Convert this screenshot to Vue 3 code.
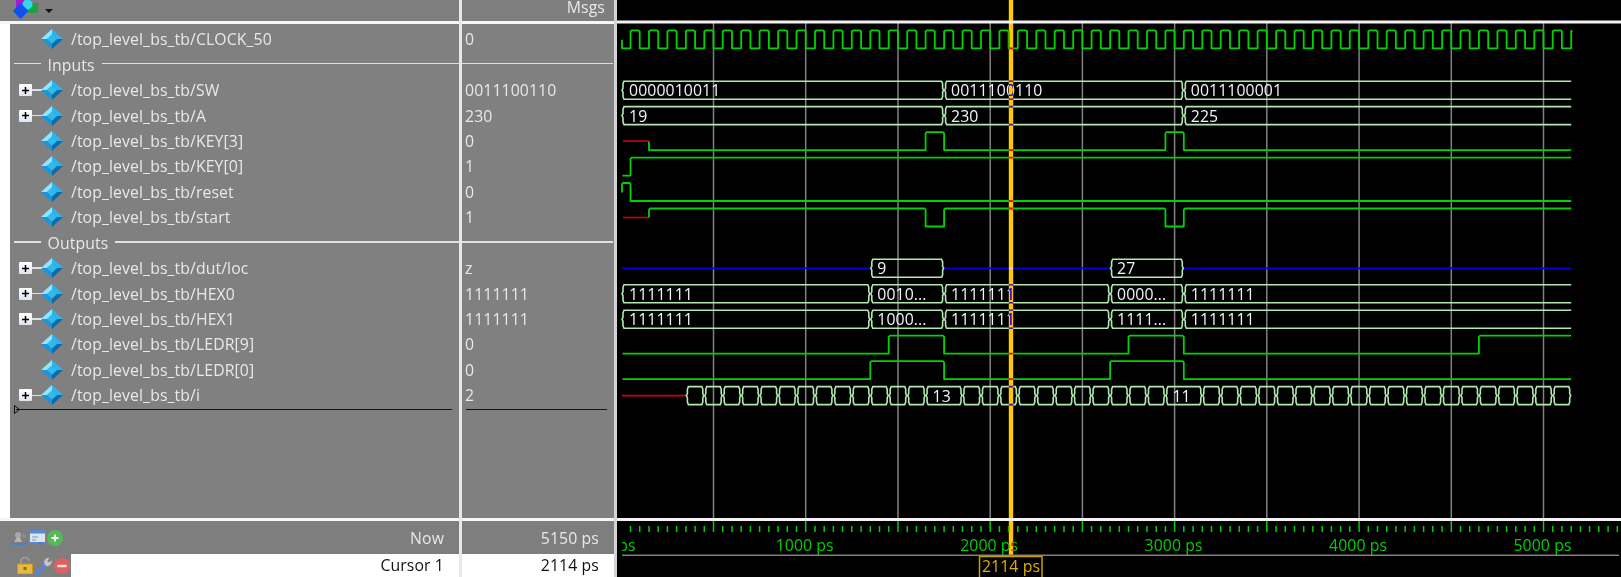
<script setup>
const rows = [
  { name: '/top_level_bs_tb/CLOCK_50', value: '0' },
  { divider: 'Inputs' },
  { name: '/top_level_bs_tb/SW', value: '0011100110', plus: true },
  { name: '/top_level_bs_tb/A', value: '230', plus: true },
  { name: '/top_level_bs_tb/KEY[3]', value: '0' },
  { name: '/top_level_bs_tb/KEY[0]', value: '1' },
  { name: '/top_level_bs_tb/reset', value: '0' },
  { name: '/top_level_bs_tb/start', value: '1' },
  { divider: 'Outputs' },
  { name: '/top_level_bs_tb/dut/loc', value: 'z', plus: true },
  { name: '/top_level_bs_tb/HEX0', value: '1111111', plus: true },
  { name: '/top_level_bs_tb/HEX1', value: '1111111', plus: true },
  { name: '/top_level_bs_tb/LEDR[9]', value: '0' },
  { name: '/top_level_bs_tb/LEDR[0]', value: '0' },
  { name: '/top_level_bs_tb/i', value: '2', plus: true },
]

const END = 5150
const X = (t) => 621.3 + 0.18444 * t
const top = (i) => 30.3 + 25.45 * i
const f = (n) => n.toFixed(1)

function bit(i, prefix, startLevel, edges, finish = true) {
  const hi = top(i)
  const lo = hi + 18
  let level = startLevel
  let d = prefix
  for (const e of edges) {
    const x = X(e)
    if (level) d += `L${f(x - 1.2)} ${f(hi)}L${f(x)} ${f(hi + 1.2)}L${f(x)} ${f(lo)}`
    else d += `L${f(x)} ${f(lo)}L${f(x)} ${f(hi + 1.2)}L${f(x + 1.2)} ${f(hi)}`
    level = !level
  }
  if (finish) d += `L${f(X(END))} ${f(level ? hi : lo)}`
  return d
}

const clockEdges = []
for (let t = 50; t <= END; t += 50) clockEdges.push(t)

const lowStart = (i) => `M622.5 ${f(top(i) + 18)}`
const bitPaths = [
  bit(0, `M622 ${f(top(0) + 9.5)}L622 ${f(top(0) + 18)}`, false, clockEdges, false),
  bit(4, `M649 ${f(top(4) + 9.5)}L649 ${f(top(4) + 18)}`, false, [1650, 1750, 2950, 3050]),
  bit(5, lowStart(5), false, [50]),
  bit(6, `M622 ${f(top(6) + 9.5)}L622 ${f(top(6) + 1.2)}L623.2 ${f(top(6))}`, true, [50]),
  bit(7, `M649 ${f(top(7) + 9)}L649 ${f(top(7) + 1.2)}L650.2 ${f(top(7))}`, true, [1650, 1750, 2950, 3050]),
  bit(12, lowStart(12), false, [1450, 1750, 2750, 3050, 4650]),
  bit(13, lowStart(13), false, [1350, 1750, 2650, 3050]),
]

const redPaths = [
  `M623 ${f(top(4) + 9)}L649 ${f(top(4) + 9)}`,
  `M623 ${f(top(7) + 9)}L649 ${f(top(7) + 9)}`,
  `M622 ${f(top(14) + 9)}L686 ${f(top(14) + 9)}`,
]

const zMid = top(9) + 9
const bluePaths = [[0, 1350], [1750, 2650], [3050, END]].map(
  ([a, b]) => `M${f(Math.max(X(a), 622))} ${f(zMid)}L${f(X(b))} ${f(zMid)}`,
)

function hex(i, t0, t1) {
  const t = top(i)
  const m = t + 9
  const b = t + 18
  const l = Math.max(X(t0) + 1, 622.5)
  const r = X(t1) - 1
  const leftSide = `M${f(r - 1.5)} ${f(t)}L${f(l + 1.5)} ${f(t)}L${f(l + 0.5)} ${f(t + 2.5)}L${f(l + 0.5)} ${f(m - 2)}L${f(l - 0.5)} ${f(m)}L${f(l + 0.5)} ${f(m + 2)}L${f(l + 0.5)} ${f(b - 2.5)}L${f(l + 1.5)} ${f(b)}L${f(r - 1.5)} ${f(b)}`
  if (t1 === END && i !== 14) {
    return `M${f(X(END))} ${f(t)}L${f(l + 1.5)} ${f(t)}L${f(l + 0.5)} ${f(t + 2.5)}L${f(l + 0.5)} ${f(m - 2)}L${f(l - 0.5)} ${f(m)}L${f(l + 0.5)} ${f(m + 2)}L${f(l + 0.5)} ${f(b - 2.5)}L${f(l + 1.5)} ${f(b)}L${f(X(END))} ${f(b)}`
  }
  return `${leftSide}L${f(r - 0.5)} ${f(b - 2.5)}L${f(r - 0.5)} ${f(m + 2)}L${f(r + 0.5)} ${f(m)}L${f(r - 0.5)} ${f(m - 2)}L${f(r - 0.5)} ${f(t + 2.5)}Z`
}

const busDefs = [
  [2, [[0, 1750, '0000010011'], [1750, 3050, '0011100110'], [3050, END, '0011100001']]],
  [3, [[0, 1750, '19'], [1750, 3050, '230'], [3050, END, '225']]],
  [9, [[1350, 1750, '9'], [2650, 3050, '27']]],
  [10, [[0, 1350, '1111111'], [1350, 1750, '0010...'], [1750, 2650, '1111111'], [2650, 3050, '0000...'], [3050, END, '1111111']]],
  [11, [[0, 1350, '1111111'], [1350, 1750, '1000...'], [1750, 2650, '1111111'], [2650, 3050, '1111...'], [3050, END, '1111111']]],
]
const iSegs = []
for (let t = 350; t < END; ) {
  if (t === 1650) { iSegs.push([t, 1850, '13']); t = 1850 }
  else if (t === 2950) { iSegs.push([t, 3150, '11']); t = 3150 }
  else { iSegs.push([t, t + 100, '']); t += 100 }
}
busDefs.push([14, iSegs])

const busPaths = []
const busTexts = []
for (const [i, segs] of busDefs) {
  for (const [a, b, label] of segs) {
    busPaths.push(hex(i, a, b))
    if (label) busTexts.push({ x: f(Math.max(X(a), 622) + 7), y: f(top(i) + 15), label })
  }
}

const grid = []
for (let k = 1; k <= 10; k++) grid.push(f(X(500 * k)))

const minorTicks = []
const majorTicks = []
for (let t = 50; X(t) < 1619; t += 50) {
  if (t % 500 === 0) majorTicks.push(f(X(t)))
  else minorTicks.push(f(X(t)))
}
const timeLabels = [0, 1000, 2000, 3000, 4000, 5000].map((t) => ({ x: f(X(t) - 1), label: `${t} ps` }))
</script>

<template>
  <div class="app">
    <section class="col names">
      <header class="head">
        <svg class="logo" viewBox="0 0 40 21" width="40" height="21">
          <rect x="16" y="0" width="8" height="7" fill="#a020d0" />
          <rect x="28" y="3" width="10" height="10" fill="#20a040" />
          <circle cx="27.5" cy="4.5" r="5" fill="#30d8f0" />
          <polygon points="20.5,3 28.5,11 20.5,19 13,11" fill="#1050f0" />
        </svg>
        <svg class="caret" viewBox="0 0 8 4" width="8" height="4"><polygon points="0,0 8,0 4,4" fill="#111" /></svg>
      </header>
      <div class="hline"></div>
      <div class="body names-body">
        <div v-for="(r, n) in rows" :key="n" class="row">
          <template v-if="r.divider">
            <span class="rule short"></span>
            <span class="div-text">{{ r.divider }}</span>
            <span class="rule grow"></span>
          </template>
          <template v-else>
            <span class="tree">
              <template v-if="r.plus">
                <span class="plus"><svg viewBox="0 0 9 9" width="9" height="9"><path d="M1 4.5H8M4.5 1V8" stroke="#000" stroke-width="1.5" /></svg></span>
                <span class="conn"></span>
              </template>
            </span>
            <svg class="dia" viewBox="0 0 22 20" width="22" height="20">
              <polygon points="11,0 22,10 16,10 11,5.5" fill="#2cb4ee" />
              <polygon points="11,0 0,10 6,10 11,5.5" fill="#8fe6ff" />
              <polygon points="0,10 11,20 11,14.5 6,10" fill="#1c94d8" />
              <polygon points="22,10 11,20 11,14.5 16,10" fill="#0a6cab" />
              <polygon points="11,5.5 16,10 11,14.5 6,10" fill="#2cbcf4" />
            </svg>
            <span class="name">{{ r.name }}</span>
          </template>
        </div>
        <div class="endline">
          <svg class="marker" viewBox="0 0 6 9" width="6" height="9"><polygon points="0.5,0.5 5.5,4.5 0.5,8.5" fill="none" stroke="#111" /></svg>
        </div>
      </div>
      <div class="hline"></div>
      <footer class="foot">
        <div class="foot-row now-row">
          <span class="icons">
            <svg viewBox="0 0 16 14" width="16" height="14">
              <circle cx="6" cy="4" r="3" fill="#a8a8a8" />
              <path d="M2 11 L5 6 H8 L10 11Z" fill="#b4b4b4" />
              <circle cx="12" cy="5" r="2.2" fill="#8c8c8c" />
              <path d="M1 10V13H15V10" fill="none" stroke="#3c82d8" stroke-width="1.5" />
            </svg>
            <svg viewBox="0 0 17 16" width="17" height="16">
              <rect x="0.5" y="0.5" width="16" height="12" fill="#dce4f2" stroke="#5a8ad0" />
              <rect x="0.5" y="0.5" width="16" height="3" fill="#5a8ad0" />
              <path d="M3 7H9M3 10H7" stroke="#7a9ac8" />
              <polygon points="9,12 14,12 11.5,16" fill="#4a7ac8" />
            </svg>
            <svg viewBox="0 0 16 16" width="16" height="16">
              <circle cx="8" cy="8" r="8" fill="#58b858" />
              <path d="M4.5 8H11.5M8 4.5V11.5" stroke="#eaf8ea" stroke-width="2" />
            </svg>
          </span>
          <span class="foot-label">Now</span>
        </div>
        <div class="foot-row cursor-row">
          <span class="icons icons2">
            <svg viewBox="0 0 16 17" width="16" height="17">
              <path d="M4 8V4.5a4 4 0 0 1 8 0" fill="none" stroke="#a0a0a0" stroke-width="1.6" />
              <rect x="0.5" y="7" width="15" height="10" fill="#e8b840" stroke="#c89820" />
              <rect x="6.5" y="10" width="3" height="3" fill="#8a6a10" />
            </svg>
            <svg viewBox="0 0 17 18" width="17" height="18">
              <path d="M2 16.5 L11 7" stroke="#4f86e0" stroke-width="3.6" stroke-linecap="round" />
              <path d="M9.5 7 A4.5 4.5 0 0 1 14.5 0.8 L12.4 3.8 L14 5.6 L16.6 3.4 A4.5 4.5 0 0 1 11 9Z" fill="#c4c4c4" />
            </svg>
            <svg viewBox="0 0 16 16" width="16" height="16">
              <circle cx="8" cy="8" r="8" fill="#e06060" />
              <path d="M3.5 8H12.5" stroke="#fbeaea" stroke-width="2.4" />
            </svg>
          </span>
          <span class="cursor-cell">Cursor 1</span>
        </div>
      </footer>
    </section>

    <section class="col values">
      <header class="head msgs">Msgs</header>
      <div class="hline"></div>
      <div class="body">
        <div v-for="(r, n) in rows" :key="n" class="row value-row">
          <span v-if="r.divider" class="rule grow"></span>
          <span v-else class="val">{{ r.value }}</span>
        </div>
        <div class="endline value-end"></div>
      </div>
      <div class="hline"></div>
      <footer class="foot">
        <div class="foot-row now-row val-foot"><span class="foot-label">5150 ps</span></div>
        <div class="foot-row cursor-row"><span class="cursor-cell full">2114 ps</span></div>
      </footer>
    </section>

    <svg class="wave" viewBox="617 0 1004 577" width="1004" height="577">
      <defs>
        <clipPath id="scale-clip"><rect x="622" y="530" width="999" height="30" /></clipPath>
      </defs>
      <rect x="617" y="0" width="1004" height="577" fill="#000" />
      <line v-for="g in grid" :key="g" :x1="g" :x2="g" y1="23" y2="518" class="grid" />
      <path v-for="(d, n) in bluePaths" :key="'z' + n" :d="d" class="z" />
      <path v-for="(d, n) in redPaths" :key="'x' + n" :d="d" class="red" />
      <path v-for="(d, n) in bitPaths" :key="'b' + n" :d="d" class="bit" />
      <path v-for="(d, n) in busPaths" :key="'h' + n" :d="d" class="bus" />
      <text v-for="(t, n) in busTexts" :key="'t' + n" :x="t.x" :y="t.y" class="bus-text">{{ t.label }}</text>

      <line v-for="x in minorTicks" :key="'m' + x" :x1="x" :x2="x" y1="526" y2="532" class="tick" />
      <line v-for="x in majorTicks" :key="'j' + x" :x1="x" :x2="x" y1="521" y2="532" class="tick" />
      <g clip-path="url(#scale-clip)">
        <text v-for="l in timeLabels" :key="l.label" :x="l.x" y="551" class="time">{{ l.label }}</text>
      </g>
      <line x1="622" x2="1619" y1="555.3" y2="555.3" class="axis" />

      <rect x="1008.8" y="0" width="4.4" height="555" class="cursor" />
      <rect x="617" y="20.5" width="1004" height="3" fill="#f2f2f2" />
      <rect x="617" y="518" width="1004" height="3" fill="#f2f2f2" />

      <rect x="979.5" y="556.5" width="62.5" height="22" class="cursor-box" />
      <text x="1011" y="571.5" class="cursor-text">2114 ps</text>
    </svg>
  </div>
</template>

<style scoped>
.app {
  display: flex;
  width: 1621px;
  height: 577px;
  overflow: hidden;
  background: #000;
  font-family: "Open Sans", "Noto Sans", sans-serif;
  font-size: 15.8px;
  letter-spacing: 0.1px;
  color: #e8e8e8;
  filter: blur(0.4px);
}
.col {
  display: flex;
  flex-direction: column;
  background: #808080;
  height: 577px;
  flex: none;
  box-sizing: border-box;
}
.names { width: 459px; }
.values {
  width: 158px;
  border-left: 3.5px solid #e8e8e8;
  border-right: 3.5px solid #d4d4d4;
}
.head {
  height: 20.5px;
  flex: none;
  display: flex;
  align-items: flex-start;
  background: #7e7e7e;
}
.logo { flex: none; }
.caret { margin: 9px 0 0 5px; flex: none; }
.msgs {
  justify-content: flex-end;
  padding-right: 9px;
  line-height: 14px;
}
.hline { height: 3px; background: #f6f6f6; flex: none; }
.body {
  flex: 1;
  min-height: 0;
  padding-top: 3px;
  box-sizing: border-box;
}
.names-body { border-left: 10.5px solid #fff; }
.row {
  height: 25.45px;
  display: flex;
  align-items: center;
  white-space: nowrap;
}
.tree {
  width: 31px;
  flex: none;
  display: flex;
  align-items: center;
  padding-left: 8.5px;
  box-sizing: border-box;
}
.plus {
  width: 13px;
  height: 12px;
  flex: none;
  display: flex;
  align-items: center;
  justify-content: center;
  background: linear-gradient(#fff, #dfe4f0);
  border-radius: 1px;
}
.conn { width: 10px; height: 1.5px; background: #d8e4ee; flex: none; }
.dia { flex: none; }
.name { margin-left: 8px; }
.rule { height: 1.6px; background: #e0e0e0; display: block; margin-top: -2px; }
.short { width: 27px; margin-left: 3.5px; flex: none; }
.grow { flex: 1; }
.div-text { margin: 0 7px 0 7px; }
.value-row { padding-right: 1px; }
.val { margin-left: 3px; }
.endline {
  position: relative;
  height: 1.6px;
  margin: 0.5px 7px 0 5.5px;
  background: #141414;
}
.marker { position: absolute; left: -2px; top: -4px; }
.value-end { margin: 0.5px 7px 0 3.5px; }
.foot { flex: none; height: 56px; display: flex; flex-direction: column; background: #7e7e7e; }
.foot-row { display: flex; align-items: center; }
.now-row { height: 33px; padding: 0 15px 0 12px; justify-content: space-between; box-sizing: border-box; }
.val-foot { justify-content: flex-end; }
.cursor-row { height: 23px; }
.icons { display: flex; align-items: center; gap: 1px; }
.icons2 { width: 71px; padding-left: 17px; box-sizing: border-box; gap: 2px; flex: none; }
.foot-label { color: #e8e8e8; }
.cursor-cell {
  flex: 1;
  background: #fff;
  color: #111;
  text-align: right;
  padding-right: 15px;
  line-height: 23px;
}
.wave { display: block; flex: none; isolation: isolate; }
.grid { stroke: #808080; stroke-width: 1.5; }
.z { stroke: #0000e0; stroke-width: 1.7; fill: none; }
.red { stroke: #d80000; stroke-width: 1.6; fill: none; }
.bit { stroke: #00d400; stroke-width: 1.8; fill: none; stroke-linejoin: round; }
.bus { stroke: #b0e8b0; stroke-width: 1.6; fill: none; }
.bus-text {
  fill: #f2f4f8;
  font-family: "Open Sans", "Noto Sans", sans-serif;
  font-size: 15.8px;
}
.tick { stroke: #00d400; stroke-width: 1.5; }
.time {
  fill: #00d000;
  font-family: "Open Sans", "Noto Sans", sans-serif;
  font-size: 15.8px;
  text-anchor: middle;
}
.axis { stroke: #808080; stroke-width: 1.5; }
.cursor { fill: #ffc800; mix-blend-mode: difference; }
.cursor-box { fill: #000; stroke: #c8a000; stroke-width: 1.5; }
.cursor-text {
  fill: #e0b000;
  font-family: "Open Sans", "Noto Sans", sans-serif;
  font-size: 15.8px;
  text-anchor: middle;
}
</style>
